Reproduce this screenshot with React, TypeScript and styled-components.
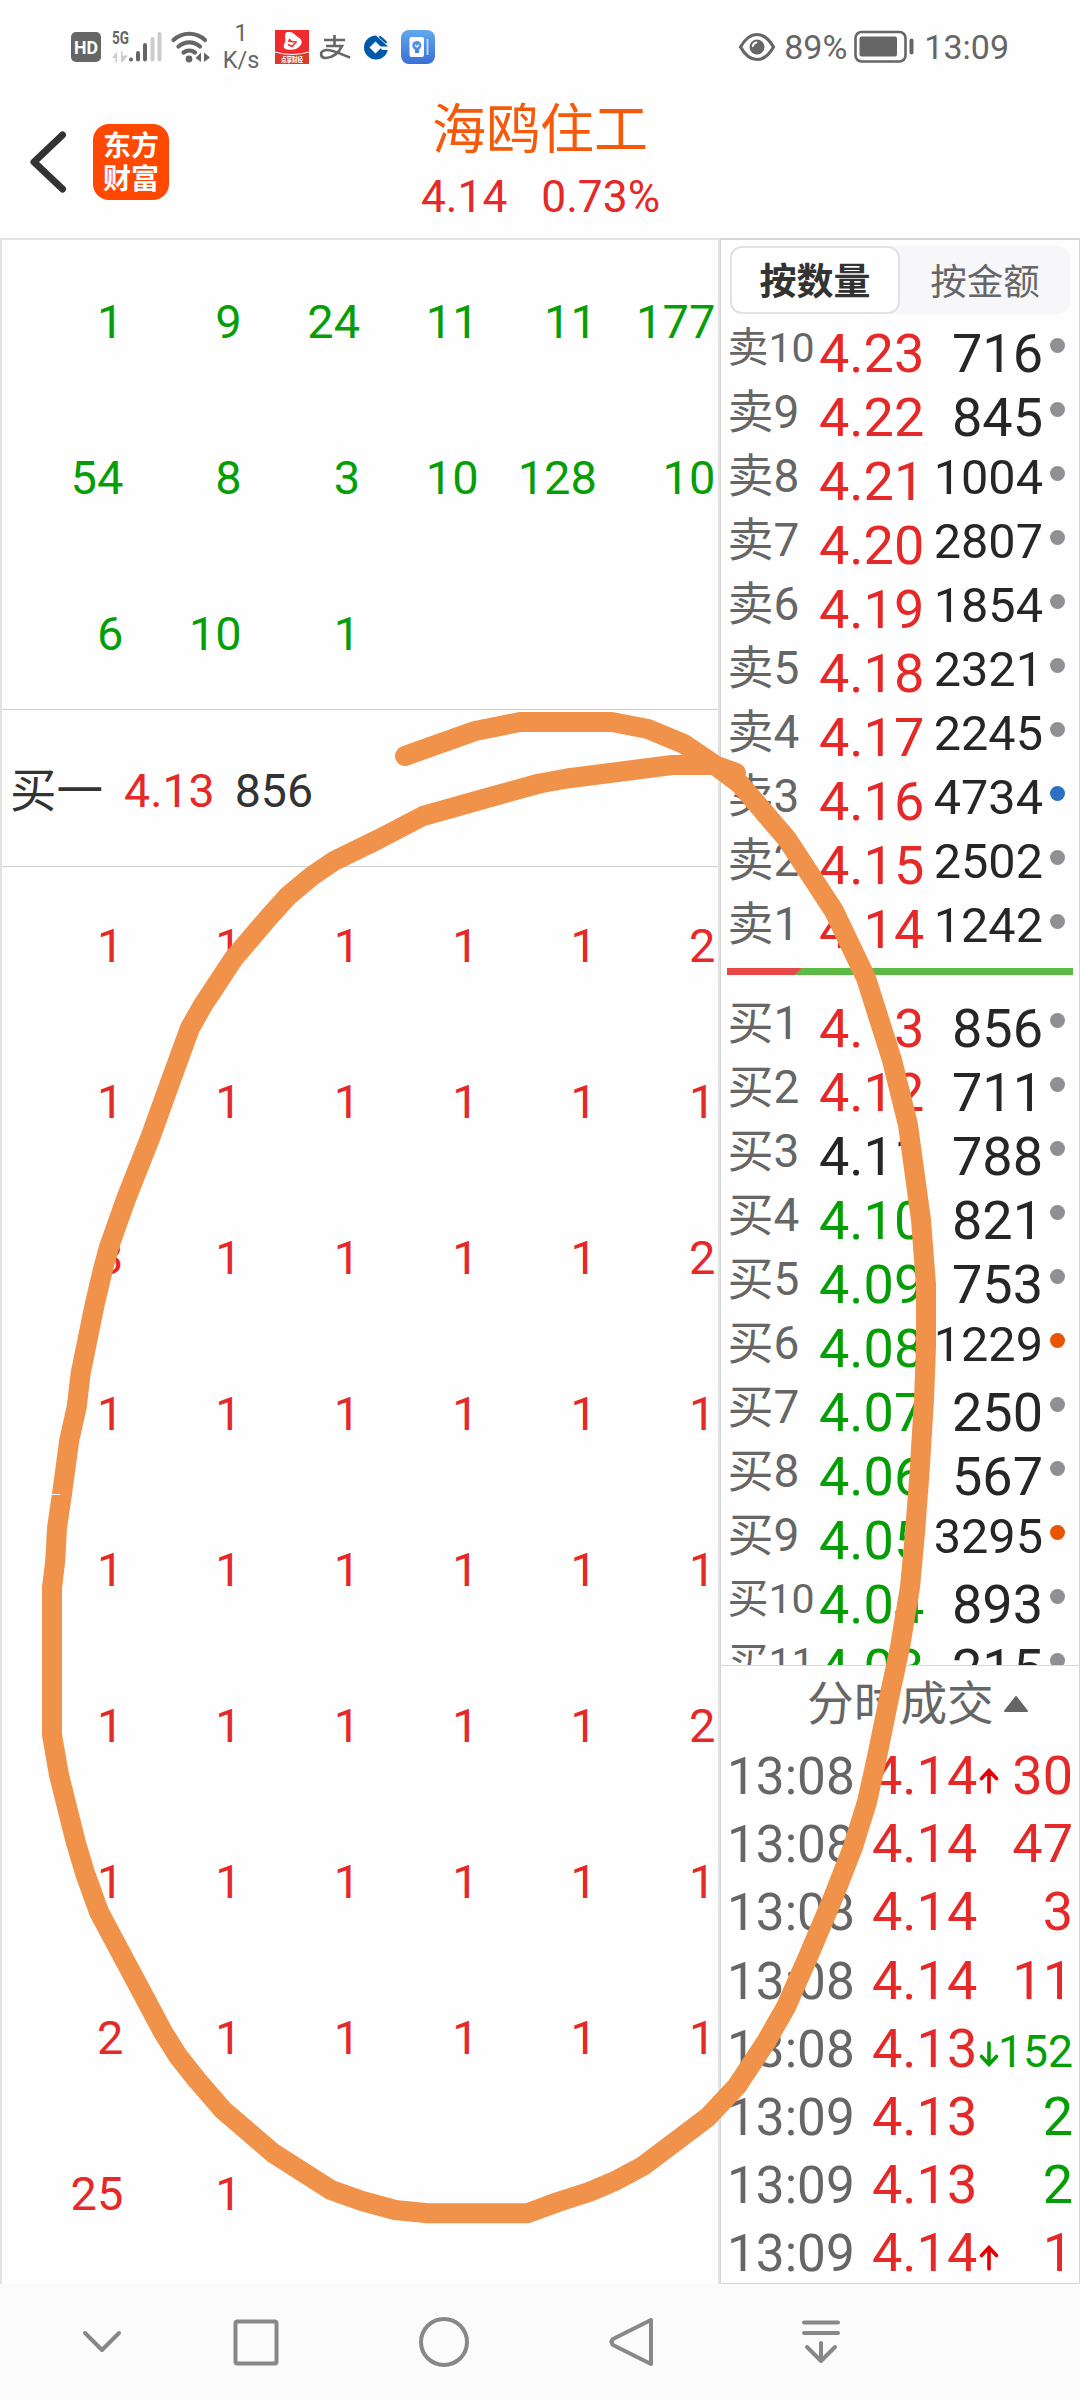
import React from 'react';
import styled, { createGlobalStyle } from 'styled-components';

const RED = '#e52828';
const GREEN = '#069e06';
const INK = '#262626';
const GREY = '#666666';
const MARKER = '#f1924a';

const GlobalStyle = createGlobalStyle`
  * { box-sizing: border-box; }
  body {
    margin: 0;
    background: #fefefe;
    font-family: Roboto, "Noto Sans CJK SC", sans-serif;
  }
`;

const Screen = styled.div`
  position: relative;
  display: flex;
  flex-direction: column;
  width: 1080px;
  height: 2400px;
  overflow: hidden;
  background: #fefefe;
`;

/* ---------- status bar ---------- */

const StatusBar = styled.header`
  display: flex;
  justify-content: space-between;
  height: 94px;
  padding: 0 71px 0 71px;
  color: ${GREY};
`;

const StatusGroup = styled.div`
  display: flex;
  align-items: center;
`;

const StatusIcon = styled.svg<{ $gap?: number }>`
  display: block;
  flex: none;
  overflow: visible;
  margin-left: ${(p) => p.$gap ?? 0}px;
`;

const NetSpeed = styled.div`
  width: 38px;
  margin-left: 11px;
  margin-right: 1px;
  font-size: 23.5px;
  line-height: 27px;
  text-align: center;
`;

const StatusText = styled.span<{ $gap: number }>`
  margin-left: ${(p) => p.$gap}px;
  font-size: 34px;
  line-height: 40px;
`;

/* ---------- title bar ---------- */

const TitleBar = styled.div`
  display: grid;
  grid-template-columns: 300px 1fr 300px;
  height: 144px;
`;

const TitleLeft = styled.div`
  display: flex;
  align-items: center;
  gap: 26px;
  padding: 0 0 8px 29px;
`;

const AppLogo = styled.div`
  width: 76px;
  height: 76px;
  padding: 4px 0 0;
  border-radius: 16px;
  background: #ff4800;
  color: #fff;
  font-family: "Noto Sans CJK SC", sans-serif;
  font-size: 28px;
  font-weight: 700;
  line-height: 33px;
  text-align: center;
`;

const TitleCenter = styled.div`
  display: flex;
  flex-direction: column;
  align-items: center;
`;

const StockName = styled.h1`
  margin: 0;
  padding-top: 4px;
  color: #f45a0a;
  font-size: 54px;
  font-weight: 400;
  line-height: 66px;
`;

const Quote = styled.div`
  display: flex;
  gap: 34px;
  padding: 6px 0 0 1px;
  color: ${RED};
  font-size: 44.3px;
  line-height: 54px;
`;

/* ---------- body ---------- */

const Body = styled.main`
  display: grid;
  grid-template-columns: 720px 360px;
  height: 2046px;
`;

const QueuePanel = styled.section`
  border: solid #e2e2e2;
  border-width: 2px 2px 0 2px;
  overflow: hidden;
`;

const QueueGrid = styled.div<{ $side: 'sell' | 'buy' }>`
  display: grid;
  grid-template-columns: repeat(6, 118.4px);
  grid-auto-rows: 156px;
  padding: ${(p) => (p.$side === 'sell' ? '4px 0 0 3px' : '1px 0 0 3px')};
  height: ${(p) => (p.$side === 'sell' ? '469px' : 'auto')};
  color: ${(p) => (p.$side === 'sell' ? GREEN : RED)};
`;

const Lot = styled.span`
  font-size: 47px;
  line-height: 156px;
  text-align: right;
`;

const BestBid = styled.div`
  display: flex;
  height: 158px;
  padding: 0 0 0 8px;
  border: solid #cfcfcf;
  border-width: 1px 0;
  color: #333;
  font-size: 46.5px;
  line-height: 162px;
`;

const BestBidPart = styled.span<{ $gap?: number; $color?: string }>`
  margin-left: ${(p) => p.$gap ?? 0}px;
  color: ${(p) => p.$color ?? 'inherit'};
`;

const BookPanel = styled.aside`
  display: flex;
  flex-direction: column;
  border: 1px solid #d3d5d9;
  border-top-width: 2px;
  overflow: hidden;
`;

const Tabs = styled.div`
  display: grid;
  grid-template-columns: 1fr 1fr;
  flex: none;
  height: 68px;
  margin: 6px 9px 8px;
  border-radius: 12px;
  background: #f7f7fa;
`;

const Tab = styled.button<{ $active?: boolean }>`
  margin: 0;
  padding: 5px 0 0;
  border: 2px solid ${(p) => (p.$active ? '#e2e2e2' : 'transparent')};
  border-radius: 12px;
  background: ${(p) => (p.$active ? '#fff' : 'transparent')};
  color: ${(p) => (p.$active ? '#333' : GREY)};
  font-family: inherit;
  font-size: ${(p) => (p.$active ? 37 : 36.5)}px;
  font-weight: ${(p) => (p.$active ? 700 : 400)};
  line-height: 59px;
`;

const Ladder = styled.div`
  flex: none;
  height: 1343px;
  overflow: hidden;
`;

const Level = styled.div`
  display: grid;
  grid-template-columns: 91px 110px 1fr 31px;
  height: 64px;
  padding-left: 6.5px;
`;

const LevelName = styled.span<{ $long: boolean }>`
  color: ${GREY};
  font-size: ${(p) => (p.$long ? 41 : 46)}px;
  line-height: 52px;
  white-space: nowrap;
`;

const LevelPrice = styled.span<{ $color: string }>`
  color: ${(p) => p.$color};
  padding-left: 0.5px;
  font-size: 54px;
  line-height: 63px;
`;

const LevelLots = styled.span<{ $long: boolean }>`
  margin-left: -20px;
  color: ${INK};
  font-size: ${(p) => (p.$long ? 48.6 : 54)}px;
  line-height: ${(p) => (p.$long ? 55 : 63)}px;
  text-align: right;
  padding-right: 5px;
`;

const Dot = styled.i<{ $color: string }>`
  width: 15px;
  height: 15px;
  margin: 16px 0 0 2px;
  border-radius: 50%;
  background: ${(p) => p.$color};
`;

const Ratio = styled.div`
  height: 7px;
  margin: 6px 6px 22px;
  background: linear-gradient(135deg, #e64848 0 53px, #5bb944 53px);
`;

const TradesHead = styled.div`
  display: flex;
  align-items: center;
  flex: none;
  height: 77px;
  padding-left: 86px;
  border-top: 1px solid #d8d8d8;
  color: ${GREY};
  font-size: 46.7px;
  line-height: 77px;
`;

const Trade = styled.div`
  display: grid;
  grid-template-columns: 145px 108px 21px 1fr;
  align-items: baseline;
  flex: none;
  height: 68.2px;
  padding: 0 6px 0 6px;
  line-height: 68.2px;
`;

const TradeTime = styled.span`
  color: ${GREY};
  font-size: 51.3px;
`;

const TradePrice = styled.span`
  color: ${RED};
  font-size: 54px;
`;

const TradeLots = styled.span<{ $color: string; $long: boolean }>`
  margin-left: -4px;
  color: ${(p) => p.$color};
  font-size: ${(p) => (p.$long ? 44.5 : 54)}px;
  text-align: right;
`;

const TickArrow = styled.svg`
  display: block;
  margin: 0 0 5px -2px;
`;

const NavBar = styled.nav`
  display: flex;
  align-items: center;
  height: 116px;
  padding-left: 77px;
  background: #fbfbfb;
`;

const NavIcon = styled.svg<{ $gap?: number }>`
  display: block;
  flex: none;
  margin-left: ${(p) => p.$gap ?? 0}px;
  fill: none;
  stroke: #888;
  stroke-width: 4;
  stroke-linecap: round;
  stroke-linejoin: round;
`;

/* hand-drawn marker circle lying over both panels */
const Annotation = styled.svg`
  position: absolute;
  top: 0;
  left: 0;
  pointer-events: none;
`;

/* ---------- data ---------- */

const sellQueue = ['1', '9', '24', '11', '11', '177', '54', '8', '3', '10', '128', '10', '6', '10', '1'];

const buyQueue = [
  '1', '1', '1', '1', '1', '2',
  '1', '1', '1', '1', '1', '1',
  '3', '1', '1', '1', '1', '2',
  '1', '1', '1', '1', '1', '1',
  '1', '1', '1', '1', '1', '1',
  '1', '1', '1', '1', '1', '2',
  '1', '1', '1', '1', '1', '1',
  '2', '1', '1', '1', '1', '1',
  '25', '1',
];

type Row = [name: string, price: string, lots: string, color: string, dot?: string];

const sells: Row[] = [
  ['卖10', '4.23', '716', RED],
  ['卖9', '4.22', '845', RED],
  ['卖8', '4.21', '1004', RED],
  ['卖7', '4.20', '2807', RED],
  ['卖6', '4.19', '1854', RED],
  ['卖5', '4.18', '2321', RED],
  ['卖4', '4.17', '2245', RED],
  ['卖3', '4.16', '4734', RED, '#2d70c4'],
  ['卖2', '4.15', '2502', RED],
  ['卖1', '4.14', '1242', RED],
];

const buys: Row[] = [
  ['买1', '4.13', '856', RED],
  ['买2', '4.12', '711', RED],
  ['买3', '4.11', '788', INK],
  ['买4', '4.10', '821', GREEN],
  ['买5', '4.09', '753', GREEN],
  ['买6', '4.08', '1229', GREEN, '#e85500'],
  ['买7', '4.07', '250', GREEN],
  ['买8', '4.06', '567', GREEN],
  ['买9', '4.05', '3295', GREEN, '#e85500'],
  ['买10', '4.04', '893', GREEN],
  ['买11', '4.03', '215', GREEN],
];

type Tick = 'up' | 'down' | null;

const trades: [time: string, price: string, tick: Tick, lots: string, color: string][] = [
  ['13:08', '4.14', 'up', '30', RED],
  ['13:08', '4.14', null, '47', RED],
  ['13:08', '4.14', null, '3', RED],
  ['13:08', '4.14', null, '11', RED],
  ['13:08', '4.13', 'down', '152', GREEN],
  ['13:09', '4.13', null, '2', GREEN],
  ['13:09', '4.13', null, '2', GREEN],
  ['13:09', '4.14', 'up', '1', RED],
];

const markerTrail = '405,756 475,731 520,722 612,722 648,729 684,744 712,763 740,784 787,839 834,911 866,978 892,1060 908,1125 921,1220 926,1285 926,1347 924,1400 919.5,1473 915,1533 910,1587 900,1647 888,1703 877,1757 867,1802 853,1847 833,1898 808,1957 786,2007 766,2042 737,2086 708,2117 643,2166 615,2181 589,2192 558,2202 527,2213.3 428,2213.3 395,2210 362,2201 331,2190 273,2153 223,2110 197,2080 178,2056 163,2032 99,1912 85,1873 76,1843 59,1775 52,1735 52,1588 55.3,1560 57,1528 62,1494 69.3,1440 76.7,1407 80.7,1373 95,1303 103.3,1268 109,1247 126,1199 150.5,1137 171,1080 190,1028 203,1005 219.5,980 234,958 269,917 288,896 312,876 334,861 379,839 423,816 487,798 539.5,783.5 567,778.5 672,765 714,765 736,773';

/* ---------- parts ---------- */

function Levels({ rows }: { rows: Row[] }) {
  return (
    <>
      {rows.map(([name, price, lots, color, dot]) => (
        <Level key={name}>
          <LevelName $long={name.length > 2}>{name}</LevelName>
          <LevelPrice $color={color}>{price}</LevelPrice>
          <LevelLots $long={lots.length > 3}>{lots}</LevelLots>
          <Dot $color={dot ?? '#8f8f96'} />
        </Level>
      ))}
    </>
  );
}

function TickMark({ tick }: { tick: Tick }) {
  if (!tick) return <span />;
  return (
    <TickArrow width="21" height="26" viewBox="0 0 21 26" fill="none" strokeWidth="3.6" strokeLinecap="round"
      stroke={tick === 'up' ? '#e30000' : GREEN}>
      {tick === 'up' ? <path d="M11 24V3M3.500 10.500 11 2.500l7.500 8" /> : <path d="M11 2v21M3.500 15.500 11 23.500l7.500-8" />}
    </TickArrow>
  );
}

function StatusLeft() {
  return (
    <StatusGroup>
      <StatusIcon width="30" height="30" viewBox="0 0 30 30">
        <rect width="30" height="30" rx="5" fill="#666" />
        <text x="15" y="22" fill="#fff" fontSize="19" fontWeight="700" textAnchor="middle" textLength="24" lengthAdjust="spacingAndGlyphs">HD</text>
      </StatusIcon>
      <StatusIcon $gap={11} width="50" height="32" viewBox="0 0 50 32">
        <text x="0" y="13" fill="#666" fontSize="19" fontWeight="700" textLength="17" lengthAdjust="spacingAndGlyphs">5G</text>
        <path d="M0 27 5 20.500v11H3.500V27zM9 31V20h1.500v4.500H16L10.500 31z" fill="#ccc" />
        <g strokeWidth="4" strokeLinecap="round" stroke="#666">
          <path d="M19 28.500v0M26 22v6.500M33 14v14.500" />
          <path stroke="#ccc" d="M40.500 8v20.500M47.500 3v25.500" />
        </g>
      </StatusIcon>
      <StatusIcon $gap={9} width="40" height="33" viewBox="0 0 40 33">
        <g fill="none" stroke="#666" strokeWidth="4.200" strokeLinecap="round">
          <path d="M2.500 9a23 23 0 0 1 31.500 0" />
          <path d="M7.500 15.500a16 16 0 0 1 21.500 0" />
          <path d="M12.500 21.500a9.500 9.500 0 0 1 11.500 0" />
        </g>
        <circle cx="18" cy="28" r="3.400" fill="#666" />
        <path d="M24.500 27 30 21.500V31zM33 31v-9.500l6 5z" fill="#666" />
      </StatusIcon>
      <NetSpeed>1<br />K/s</NetSpeed>
      <StatusIcon $gap={14} width="34" height="34" viewBox="0 0 34 34">
        <rect width="34" height="34" fill="#f02b2d" />
        <path d="M11 2.500c5-1.500 8 1 11 4 4 2 6 5 4 8-3 5-9 6-14 5-4-1-4-4-2-7 1-3-1-7 1-10z" fill="#fff" />
        <path d="m13 11 8 1-4 4.500-4-2M17 12l-3-3" fill="none" stroke="#f02b2d" strokeWidth="1.500" />
        <path d="M0 22q17 5 34 0v12H0z" fill="#d83a2c" />
        <path d="M0 22q17 5 34 0" fill="none" stroke="#fff" strokeWidth="1" />
        <text x="17" y="31.500" fill="#fff" fontSize="7" fontWeight="700" textAnchor="middle" textLength="22" lengthAdjust="spacingAndGlyphs">点掌财经</text>
      </StatusIcon>
      <StatusIcon $gap={11} width="31" height="25" viewBox="0 0 31 25">
        <path d="M4 5h21M14.500 0v11M6 11h16c-3 7-10 12-16 12-6 0-7-7 0-8 7-.5 14 4 24 7.500" fill="none" stroke="#666" strokeWidth="2.700" />
      </StatusIcon>
      <StatusIcon $gap={13} width="24" height="25" viewBox="0 0 24 25">
        <circle cx="12" cy="12.500" r="12" fill="#0059a8" />
        <path d="m11.500 6.500 6 6-6 6-6-6z" fill="#fff" />
        <path d="M12.500 0 24 10.500" stroke="#fff" strokeWidth="1.600" />
        <path d="M16 11.500h9v3.500h-7z" fill="#fff" />
        <path d="m16 0 8 7.500V0z" fill="#fff" />
        <path d="m15.500 1.500 6.500 6" stroke="#0059a8" strokeWidth="2" />
      </StatusIcon>
      <StatusIcon $gap={13} width="34" height="34" viewBox="0 0 34 34">
        <defs>
          <linearGradient id="noteFill" x1="0" y1="0" x2="0" y2="1">
            <stop offset="0" stopColor="#62a8ee" />
            <stop offset="1" stopColor="#3b6fd6" />
          </linearGradient>
        </defs>
        <rect width="34" height="34" rx="8" fill="url(#noteFill)" />
        <rect x="8.500" y="7" width="14.500" height="20" rx="2" fill="#fff" />
        <path d="M26.500 9v16" stroke="#c5dafa" strokeWidth="1.800" />
        <circle cx="15.800" cy="15.500" r="4.600" fill="#5590e4" />
        <path d="M14 19h4v4h-4z" fill="#4a82de" />
        <path d="m14 15 2 2 2-2" fill="none" stroke="#fff" strokeWidth="1.200" />
      </StatusIcon>
    </StatusGroup>
  );
}

function StatusRight() {
  return (
    <StatusGroup>
      <StatusIcon width="38" height="30" viewBox="0 0 38 30">
        <path d="M2.500 15C7 7 12 2.500 19 2.500S31 7 35.500 15C31 23 26 27.500 19 27.500S7 23 2.500 15z" fill="none" stroke="#666" strokeWidth="3.200" />
        <circle cx="19" cy="15" r="7.500" fill="#666" />
        <path d="M14.800 14a4.500 4.500 0 0 1 3.700-3.500" fill="none" stroke="#fff" strokeWidth="2" strokeLinecap="round" />
      </StatusIcon>
      <StatusText $gap={8}>89%</StatusText>
      <StatusIcon $gap={7} width="61" height="32" viewBox="0 0 61 32">
        <rect x="1.500" y="1" width="50" height="29.500" rx="6" fill="none" stroke="#666" strokeWidth="2.600" />
        <rect x="5.500" y="5.500" width="37.500" height="20" rx="2" fill="#666" />
        <rect x="55.500" y="7.500" width="4" height="16" rx="2" fill="#666" />
      </StatusIcon>
      <StatusText $gap={9}>13:09</StatusText>
    </StatusGroup>
  );
}

export default function App() {
  return (
    <Screen>
      <GlobalStyle />
      <StatusBar>
        <StatusLeft />
        <StatusRight />
      </StatusBar>

      <TitleBar>
        <TitleLeft>
          <StatusIcon width="38" height="62" viewBox="0 0 38 62">
            <path d="M33.500 4 5 31l28.500 27" fill="none" stroke="#333" strokeWidth="7" strokeLinecap="round" strokeLinejoin="round" />
          </StatusIcon>
          <AppLogo>东方<br />财富</AppLogo>
        </TitleLeft>
        <TitleCenter>
          <StockName>海鸥住工</StockName>
          <Quote>
            <span>4.14</span>
            <span>0.73%</span>
          </Quote>
        </TitleCenter>
      </TitleBar>

      <Body>
        <QueuePanel>
          <QueueGrid $side="sell">
            {sellQueue.map((lots, i) => <Lot key={i}>{lots}</Lot>)}
          </QueueGrid>
          <BestBid>
            <BestBidPart>买一</BestBidPart>
            <BestBidPart $gap={21} $color={RED}>4.13</BestBidPart>
            <BestBidPart $gap={20}>856</BestBidPart>
          </BestBid>
          <QueueGrid $side="buy">
            {buyQueue.map((lots, i) => <Lot key={i}>{lots}</Lot>)}
          </QueueGrid>
        </QueuePanel>

        <BookPanel>
          <Tabs>
            <Tab $active>按数量</Tab>
            <Tab>按金额</Tab>
          </Tabs>
          <Ladder>
            <Levels rows={sells} />
            <Ratio />
            <Levels rows={buys} />
          </Ladder>
          <TradesHead>
            分时成交
            <StatusIcon $gap={10} width="24" height="16" viewBox="0 0 24 16">
              <path d="M12 1 23 15H1z" fill="#666" stroke="#666" strokeWidth="2" strokeLinejoin="round" />
            </StatusIcon>
          </TradesHead>
          {trades.map(([time, price, tick, lots, color], i) => (
            <Trade key={i}>
              <TradeTime>{time}</TradeTime>
              <TradePrice>{price}</TradePrice>
              <TickMark tick={tick} />
              <TradeLots $color={color} $long={lots.length > 2}>{lots}</TradeLots>
            </Trade>
          ))}
        </BookPanel>
      </Body>

      <NavBar>
        <NavIcon width="50" height="52" viewBox="0 0 50 52">
          <path d="m8 17 17 17 17-17" />
        </NavIcon>
        <NavIcon $gap={105} width="48" height="52" viewBox="0 0 48 52">
          <rect x="3.500" y="5.500" width="41" height="42" rx="2" />
        </NavIcon>
        <NavIcon $gap={138} width="52" height="52" viewBox="0 0 52 52">
          <circle cx="26" cy="26" r="23" />
        </NavIcon>
        <NavIcon $gap={137} width="50" height="52" viewBox="0 0 50 52">
          <path d="M44 4v44L6 29q-3-3 0-6z" />
        </NavIcon>
        <NavIcon $gap={139} width="50" height="52" viewBox="0 0 50 52">
          <path d="M8 6.500h34M8 17h34M25 27v18M11 31l14 14 14-14" />
        </NavIcon>
      </NavBar>

      <Annotation width="1080" height="2400" viewBox="0 0 1080 2400">
        <polyline points={markerTrail} fill="none" stroke={MARKER} strokeWidth="20" strokeLinecap="round" strokeLinejoin="round" />
        <path d="M52 1494.500h8" stroke="#fff" strokeWidth="1" />
      </Annotation>
    </Screen>
  );
}
